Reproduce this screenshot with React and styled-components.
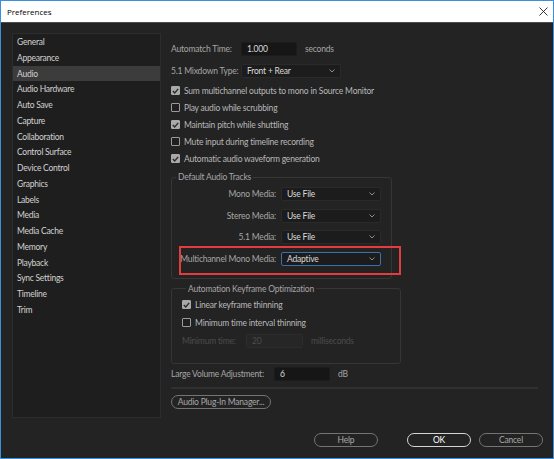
import React from 'react';
import styled, { createGlobalStyle } from 'styled-components';

const Global = createGlobalStyle`
  html, body { margin: 0; padding: 0; background: #ffffff; }
  * { box-sizing: border-box; }
`;

const Window = styled.div`
  width: 554px;
  height: 459px;
  border: 1px solid #3b8fdf;
  display: flex;
  flex-direction: column;
  background: #232323;
  font-family: Lato, "Open Sans", sans-serif;
  font-size: 8.5px;
  letter-spacing: -0.2px;
`;

const TitleBar = styled.div`
  height: 22px;
  flex: none;
  background: #ffffff;
  border-bottom: 1px solid #4c4c4c;
  display: flex;
  align-items: center;
  justify-content: space-between;
  padding: 0 5px 0 6px;
  font-family: "Open Sans", sans-serif;
  font-size: 8px;
  letter-spacing: 0;
  color: #000;
`;

const CloseIcon = styled.svg`
  width: 9px;
  height: 9px;
  display: block;
`;

const Body = styled.div`
  flex: 1;
  display: flex;
  flex-direction: column;
  padding: 10px 10px 10px 11px;
`;

const Main = styled.div`
  height: 385px;
  display: flex;
`;

const Sidebar = styled.ul`
  list-style: none;
  margin: 0;
  padding: 0;
  width: 149px;
  height: 100%;
  background: #1e1e1e;
  border: 1px solid #2d2d2d;
`;

const SideItem = styled.li`
  height: 15.75px;
  line-height: 15.75px;
  padding: 1px 0 0 4px;
  color: #d2d2d2;
  letter-spacing: -0.25px;
  background: ${p => (p.$active ? '#3c3c3c' : 'transparent')};
  white-space: nowrap;
`;

const Pane = styled.div`
  flex: 1;
  margin-left: 10px;
  display: flex;
  flex-direction: column;
  padding-top: 9px;
`;

const Row = styled.div`
  display: flex;
  align-items: center;
  height: 14px;
  margin-top: ${p => p.$mt || 0}px;
  position: relative;
`;

const Label = styled.span`
  width: ${p => p.$w}px;
  flex: none;
  color: ${p => (p.$disabled ? '#4c4c4c' : '#a6a6a6')};
  text-align: ${p => (p.$right ? 'right' : 'left')};
  padding-right: ${p => (p.$right ? 5 : 0)}px;
  white-space: nowrap;
`;

const Unit = styled.span`
  margin-left: 8px;
  color: ${p => (p.$disabled ? '#4c4c4c' : '#a6a6a6')};
`;

const Input = styled.div`
  width: ${p => p.$w}px;
  height: 14px;
  border-radius: 2px;
  background: ${p => (p.$disabled ? '#262626' : '#161616')};
  border: 1px solid ${p => (p.$disabled ? '#2c2c2c' : '#1c1c1c')};
  color: ${p => (p.$disabled ? '#4c4c4c' : '#d8d8d8')};
  padding-left: 5px;
  line-height: 12px;
`;

const Select = styled.div`
  width: 100px;
  height: 14px;
  border-radius: 2px;
  background: #1c1c1c;
  border: 1px solid ${p => (p.$focus ? '#3a70ad' : '#2a2a2a')};
  color: #dadada;
  display: flex;
  align-items: center;
  justify-content: space-between;
  padding: 0 5px 0 5px;
`;

const Chevron = styled.svg`
  width: 6px;
  height: 4px;
  display: block;
`;

const CheckList = styled.div`
  margin-top: ${p => p.$mt || 0}px;
  display: flex;
  flex-direction: column;
`;

const CheckRow = styled.label`
  height: ${p => p.$h || 17}px;
  display: flex;
  align-items: center;
  gap: 4px;
  color: #b8b8b8;
  white-space: nowrap;
`;

const Box = styled.span`
  width: 9px;
  height: 9px;
  border-radius: 1px;
  border: 1px solid ${p => (p.$on ? '#a9a9a9' : '#9a9a9a')};
  background: ${p => (p.$on ? '#a9a9a9' : '#1f1f1f')};
  display: flex;
  align-items: center;
  justify-content: center;
  flex: none;
`;

const Group = styled.fieldset`
  margin: ${p => p.$mt}px 0 0 0;
  width: ${p => p.$w}px;
  border: 1px solid #363636;
  border-radius: 3px;
  padding: ${p => p.$pt}px 0 ${p => p.$pb}px ${p => p.$pl}px;
  display: flex;
  flex-direction: column;
  gap: ${p => p.$gap || 0}px;
`;

const Legend = styled.legend`
  margin-left: 4px;
  padding: 0 2px;
  color: #a6a6a6;
  line-height: 12px;
`;

const Highlight = styled.div`
  position: absolute;
  left: 7px;
  top: -6px;
  width: 222px;
  height: 29px;
  border: 2px solid #e23c3e;
  pointer-events: none;
`;

const Separator = styled.div`
  height: 2px;
  background: #303030;
  margin: 6px 5px 0 0;
`;

const PillButton = styled.button`
  width: ${p => p.$w}px;
  height: 14px;
  border-radius: 7px;
  border: 1px solid ${p => (p.$primary ? '#d4d4d4' : '#747474')};
  background: transparent;
  color: ${p => (p.$primary ? '#ffffff' : '#a8a8a8')};
  font-family: inherit;
  font-size: 8.5px;
  letter-spacing: -0.2px;
  padding: 0;
  line-height: 12px;
  margin-right: ${p => p.$mr || 0}px;
  flex: none;
`;

const LeftButtonRow = styled.div`
  margin-top: 6px;
  display: flex;
`;

const Footer = styled.div`
  margin-top: 15px;
  display: flex;
  justify-content: flex-end;
`;

const Check = ({ on }) => (
  <Box $on={on}>
    {on && (
      <svg width="7" height="6" viewBox="0 0 7 6">
        <polyline points="0.8,3 2.7,4.9 6.2,0.9" fill="none" stroke="#2a2a2a" strokeWidth="1.4" />
      </svg>
    )}
  </Box>
);

const Drop = ({ value, focus }) => (
  <Select $focus={focus}>
    <span>{value}</span>
    <Chevron viewBox="0 0 6 4">
      <polyline points="0.5,0.5 3,3 5.5,0.5" fill="none" stroke="#9a9a9a" strokeWidth="0.9" />
    </Chevron>
  </Select>
);

const items = [
  'General', 'Appearance', 'Audio', 'Audio Hardware', 'Auto Save', 'Capture',
  'Collaboration', 'Control Surface', 'Device Control', 'Graphics', 'Labels',
  'Media', 'Media Cache', 'Memory', 'Playback', 'Sync Settings', 'Timeline', 'Trim',
];

const checks = [
  ['Sum multichannel outputs to mono in Source Monitor', true],
  ['Play audio while scrubbing', false],
  ['Maintain pitch while shuttling', true],
  ['Mute input during timeline recording', false],
  ['Automatic audio waveform generation', true],
];

const tracks = [
  ['Mono Media:', 'Use File'],
  ['Stereo Media:', 'Use File'],
  ['5.1 Media:', 'Use File'],
];

export default function App() {
  return (
    <>
      <Global />
      <Window>
        <TitleBar>
          <span>Preferences</span>
          <CloseIcon viewBox="0 0 9 9">
            <path d="M0.5 0.5 L8.5 8.5 M8.5 0.5 L0.5 8.5" stroke="#222" strokeWidth="0.9" />
          </CloseIcon>
        </TitleBar>
        <Body>
          <Main>
            <Sidebar>
              {items.map(it => (
                <SideItem key={it} $active={it === 'Audio'}>{it}</SideItem>
              ))}
            </Sidebar>
            <Pane>
              <Row>
                <Label $w={70}>Automatch Time:</Label>
                <Input $w={56}>1.000</Input>
                <Unit>seconds</Unit>
              </Row>
              <Row $mt={8}>
                <Label $w={70}>5.1 Mixdown Type:</Label>
                <Drop value="Front + Rear" />
              </Row>
              <CheckList $mt={4}>
                {checks.map(([t, on]) => (
                  <CheckRow key={t}>
                    <Check on={on} />
                    {t}
                  </CheckRow>
                ))}
              </CheckList>
              <Group $mt={4} $w={221} $pt={4} $pb={12} $pl={0} $gap={7.5}>
                <Legend>Default Audio Tracks</Legend>
                {tracks.map(([l, v]) => (
                  <Row key={l}>
                    <Label $w={109} $right>{l}</Label>
                    <Drop value={v} />
                  </Row>
                ))}
                <Row>
                  <Label $w={109} $right>Multichannel Mono Media:</Label>
                  <Drop value="Adaptive" focus />
                  <Highlight />
                </Row>
              </Group>
              <Group $mt={4} $w={230} $pt={1} $pb={15} $pl={10}>
                <Legend>Automation Keyframe Optimization</Legend>
                <CheckRow $h={18}>
                  <Check on />
                  Linear keyframe thinning
                </CheckRow>
                <CheckRow $h={18}>
                  <Check on={false} />
                  Minimum time interval thinning
                </CheckRow>
                <Row $mt={2}>
                  <Label $w={64} $disabled>Minimum time:</Label>
                  <Input $w={57} $disabled>20</Input>
                  <Unit $disabled>milliseconds</Unit>
                </Row>
              </Group>
              <Row $mt={3}>
                <Label $w={103}>Large Volume Adjustment:</Label>
                <Input $w={56}>6</Input>
                <Unit>dB</Unit>
              </Row>
              <Separator />
              <LeftButtonRow>
                <PillButton $w={100}>Audio Plug-In Manager...</PillButton>
              </LeftButtonRow>
            </Pane>
          </Main>
          <Footer>
            <PillButton $w={64} $mr={29}>Help</PillButton>
            <PillButton $w={64} $mr={8} $primary>OK</PillButton>
            <PillButton $w={64}>Cancel</PillButton>
          </Footer>
        </Body>
      </Window>
    </>
  );
}
